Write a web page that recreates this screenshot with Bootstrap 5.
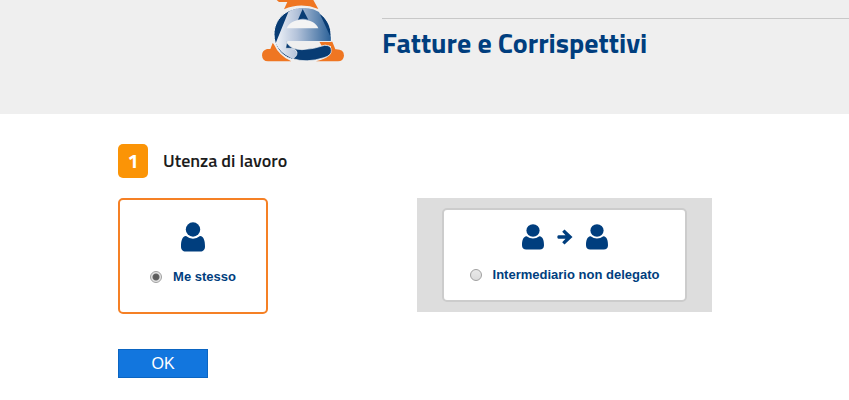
<!DOCTYPE html>
<html lang="it">
<head>
<meta charset="utf-8">
<meta name="viewport" content="width=device-width, initial-scale=1">
<title>Fatture e Corrispettivi</title>
<link href="https://cdn.jsdelivr.net/npm/bootstrap@5.3.0/dist/css/bootstrap.min.css" rel="stylesheet">
<style>
body { font-family: "Liberation Sans", Arial, sans-serif; color: #1c1c1c; }
.site-header { background: #efefef; padding-left: 262px; padding-bottom: 52px; gap: 38px; }
.site-logo { width: 82px; height: 62px; }
.site-heading { margin-top: 18px; border-top: 1px solid #c8c8c8; }
.site-heading h1 { font: 700 28px/30px "Titillium Web", Roboto, sans-serif; color: #003e7e; padding-top: 9px; }
.page-body { padding: 30px 118px 20px; }
.step-number { width: 30px; height: 34px; border-radius: 5px; background: #fb9406; color: #fff; font: 700 20px/34px "Titillium Web", "Noto Sans", sans-serif; }
.step-title { font: 600 18px/34px "Titillium Web", Roboto, sans-serif; }
.step-row { gap: 15px; margin-bottom: 20px; }
.choices { gap: 149px; }
.choice { background: #fff; border: 2px solid #ccc; border-radius: 5px; color: #003e7e; font-size: 13px; line-height: 16px; font-weight: 700; }
.choice-active { width: 150px; height: 116px; border-color: #f58025; padding-top: 22px; }
.choice-panel { background: #ddd; padding: 10px 25px; }
.choice-other { width: 245px; height: 94px; padding-top: 14px; }
.radio-line { gap: 11px; margin-top: 17px; }
.user-lg { width: 24px; height: 30px; }
.user-md { width: 22px; height: 26px; }
.arrow { width: 16px; height: 16px; }
.icons { gap: 13px; }
.icons svg { fill: #003e7e; }
.radio-dot { appearance: none; width: 12px; height: 12px; border: 1px solid #a0a0a0; border-radius: 50%; background: linear-gradient(#e9e9e9, #dcdcdc); }
.radio-dot:checked { background: radial-gradient(circle, #5c5c5c 2px, #666 3px, #e4e4e4 4px); }
.btn-ok { width: 90px; height: 29px; margin-top: 35px; padding: 0; border: 1px solid #0b65c2; border-radius: 0; background: #1276de; color: #fff; font-size: 16px; line-height: 27px; }
.btn-ok:hover { background: #0b65c2; color: #fff; }
</style>
<script defer src="https://cdn.jsdelivr.net/npm/bootstrap@5.3.0/dist/js/bootstrap.bundle.min.js"></script>
</head>
<body>
<header class="site-header d-flex">
  <svg class="site-logo flex-shrink-0" viewBox="36 0 246 186" role="img" aria-label="Agenzia delle Entrate">
    <defs>
      <linearGradient id="fade" gradientUnits="userSpaceOnUse" x1="85" y1="0" x2="243" y2="0">
        <stop offset="0" stop-color="#e8edf5"/><stop offset=".35" stop-color="#b4c3da"/><stop offset="1" stop-color="#2b6198"/>
      </linearGradient>
    </defs>
    <path fill="#ef7622" d="M80 0L87 6H112L102 28Q153 6 205 27L190 0Z"/>
    <path fill="#ef7622" d="M68 129L61 147H51Q36 151 36 166Q37 184 54 184H124Q88 169 71 132ZM208 125H247L256 148Q282 147 282 167Q280 184 264 184H198Q234 176 243 160V139Q229 131 215 137Z"/>
    <path fill="#083c74" stroke="#f8f8f8" stroke-width="3" d="M72 103C72 58 107 24 158 24C207 24 243 62 243 103V124H112L110 143H124Q141 146 141 160Q138 179 124 177C92 167 72 138 72 103Z"/>
    <path fill="url(#fade)" d="M115 36Q132 25 151 25H172Q190 26 207 36L242 112V123H111L108 145H124Q141 146 141 160Q138 177 124 175Q90 160 77 130Z"/>
    <path fill="#083c74" d="M158 27L144 59Q159 53 175 59Z"/>
    <path fill="#f4f4f4" d="M110 85C116 68 134 59 158 59C184 59 199 70 205 85Z"/>
    <path fill="#083c74" stroke="#f8f8f8" stroke-width="2" d="M110 127Q121 149 156 149Q190 148 224 136Q244 136 244 151Q245 166 222 173Q170 190 128 176Q142 170 141 156Q137 145 121 145H107Z"/>
  </svg>
  <div class="site-heading flex-grow-1"><h1 class="m-0">Fatture e Corrispettivi</h1></div>
</header>
<main class="page-body">
  <form>
    <div class="step-row d-flex align-items-center">
      <span class="step-number text-center">1</span>
      <h2 class="step-title m-0" id="step">Utenza di lavoro</h2>
    </div>
    <div class="choices d-flex align-items-start" role="radiogroup" aria-labelledby="step">
      <div class="choice choice-active flex-shrink-0">
        <div class="icons d-flex justify-content-center">
          <svg class="user-lg" viewBox="0 0 24 30" aria-hidden="true"><circle cx="12" cy="7.5" r="7.2"/><path d="M5 14Q12 19.500 19 14C23 14.500 24 19 24 24.500C24 28 22 29.500 19.500 29.500H4.500C2 29.500 0 28 0 24.500C0 19 1 14.500 5 14Z"/></svg>
        </div>
        <div class="radio-line d-flex justify-content-center align-items-center">
          <input class="radio-dot m-0" type="radio" name="utenza" id="self" checked><label for="self">Me stesso</label>
        </div>
      </div>
      <div class="choice-panel flex-shrink-0">
        <div class="choice choice-other">
          <div class="icons d-flex justify-content-center align-items-center">
            <svg class="user-md" viewBox="0 0 24 30" preserveAspectRatio="none" aria-hidden="true"><circle cx="12" cy="7.5" r="7.2"/><path d="M5 14Q12 19.500 19 14C23 14.500 24 19 24 24.500C24 28 22 29.500 19.500 29.500H4.500C2 29.500 0 28 0 24.500C0 19 1 14.500 5 14Z"/></svg>
            <svg class="arrow" viewBox="0 0 16 16" aria-hidden="true"><path d="M7.500 .5L15.500 8L7.500 15.500L5.200 13.200L8.500 9.800H1.500Q.3 9.800 .3 8T1.500 6.200H8.500L5.200 2.800Z"/></svg>
            <svg class="user-md" viewBox="0 0 24 30" preserveAspectRatio="none" aria-hidden="true"><circle cx="12" cy="7.5" r="7.2"/><path d="M5 14Q12 19.500 19 14C23 14.500 24 19 24 24.500C24 28 22 29.500 19.500 29.500H4.500C2 29.500 0 28 0 24.500C0 19 1 14.500 5 14Z"/></svg>
          </div>
          <div class="radio-line d-flex justify-content-center align-items-center">
            <input class="radio-dot m-0" type="radio" name="utenza" id="agent"><label for="agent">Intermediario non delegato</label>
          </div>
        </div>
      </div>
    </div>
    <button class="btn btn-ok d-block" type="button">OK</button>
  </form>
</main>
</body>
</html>
